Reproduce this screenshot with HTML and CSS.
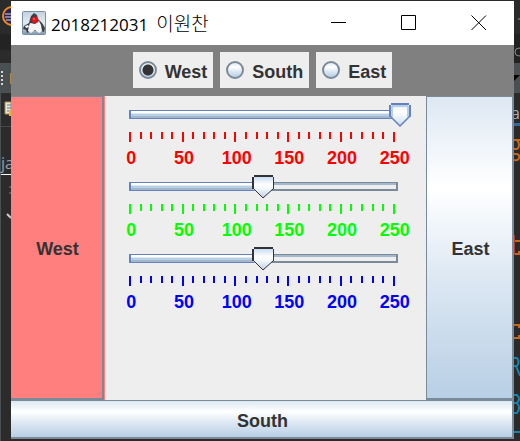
FILE: index.html
```html
<!DOCTYPE html>
<html lang="ko">
<head>
<meta charset="utf-8">
<title>2018212031 이원찬</title>
<link rel="stylesheet" href="styles.css">
</head>
<body>
<svg class="backdrop backdrop-left" width="11" height="441" aria-hidden="true">
  <rect width="11" height="441" fill="#2b2b2b"/>
  <rect y="34" width="11" height="16" fill="#232323"/>
  <rect y="63" width="11" height="30" fill="#4a4f52"/>
  <rect y="93" width="1" height="348" fill="#4a4f52"/>
  <rect x="1" y="126" width="10" height="1" fill="#45484c"/>
  <circle cx="12" cy="16" r="9" fill="#2c2255" stroke="#f08a1c" stroke-width="2"/>
  <path d="M5 14h6M5 17h6M6 20h5" stroke="#d8d8e8"/>
  <path d="M1 71h2v2h-2zM1 75h2v2h-2zM1 79h2v2h-2zM1 83h2v2h-2z" fill="#d6d6d0"/>
  <path d="M10 73h1v11h-1z" fill="#a88c48"/>
  <path d="M5 102h6v12h-6z" fill="#e9e6d6" stroke="#a88c48"/>
  <path d="M7 105h4M7 108h4M7 111h2" stroke="#5a78b0"/>
  <path d="M9 110h2v6h-2z" fill="#edb72e"/>
  <rect x="1" y="174" width="10" height="1" fill="#fff"/>
  <path d="M9 186h2v2h-2zM9 192h2v2h-2z" fill="#555"/>
  <path d="M7 214l4 4" stroke="#ccc" stroke-width="2"/>
  <text class="code-small" x="1" y="169" fill="#9a9fa4">ja</text>
</svg>
<svg class="backdrop backdrop-right" width="6" height="441" aria-hidden="true">
  <rect width="6" height="441" fill="#2a2a2b"/>
  <rect y="34" width="6" height="29" fill="#222"/>
  <rect y="63" width="6" height="30" fill="#4a4f52"/>
  <path d="M0 81V75H6z" fill="#000"/>
  <path d="M4 19h2" stroke="#999"/>
  <circle cx="5" cy="52" r="4" fill="none" stroke="#888"/>
  <rect y="123" width="6" height="3" fill="#2f6a9e"/>
  <path d="M0 140h6M0 149h3q2-1 2-4t-2-5M0 154h3q3 1 2 4t-5 2" fill="none" stroke="#c4681a" stroke-width="2"/>
  <path d="M0 241h6M0 254h5v-3M0 325h5v3M0 338h5v-3" fill="none" stroke="#c4681a" stroke-width="2"/>
  <path d="M0 235v20" stroke="#b03a30" stroke-width="2"/>
  <path d="M0 358h3q3 4 0 8H0M2 366l4 10M0 395h3q4 4 0 8H0M3 403q4 5 0 10H0M0 432h6" fill="none" stroke="#1685ad" stroke-width="2"/>
  <text class="code-small" x="-3" y="119" fill="#a9adb2">a</text>
</svg>

<main class="window">
  <header class="titlebar">
    <svg class="duke" width="24" height="24" viewBox="0 0 24 24" aria-hidden="true">
      <defs>
        <linearGradient id="tile" x2="0" y2="1">
          <stop stop-color="#c3d2df"/><stop offset=".5" stop-color="#e4ebf1"/><stop offset="1" stop-color="#8299b0"/>
        </linearGradient>
      </defs>
      <rect x=".5" y=".5" width="23" height="23" rx="1" fill="url(#tile)" stroke="#7790a8"/>
      <path d="M12 2Q9 4 8 8L7 12L2 15L1 18L4 19L5 22L9 20L19 20L22 21L23 17L20 12L16 8L15 4Z" fill="#3b4044"/>
      <path d="M8 12L13 13L17 10L19 14L20 20L17 22L13 19L9 22L6 20L7 15Z" fill="#f4f5f5"/>
      <path d="M3 15L6 14L7 16L4 17Z" fill="#fff"/>
      <circle cx="13" cy="9" r="3.300" fill="#e3131b"/>
      <circle cx="12" cy="8" r="1" fill="#ff6b63"/>
    </svg>
    <h1 class="title"><span>2018212031</span> <span class="name">이원찬</span></h1>
    <div class="controls">
      <button type="button" aria-label="Minimize"><svg width="16" height="16" viewBox="0 0 16 16"><path d="M0 7.500h15"/></svg></button>
      <button type="button" aria-label="Maximize"><svg width="16" height="16" viewBox="0 0 16 16"><path d="M.5.5h14v14H.5z"/></svg></button>
      <button type="button" aria-label="Close"><svg width="16" height="16" viewBox="0 0 16 16"><path d="M.5.500l14.500 14.500M15 .5L.5 15"/></svg></button>
    </div>
  </header>

  <div class="options" role="radiogroup" aria-label="Position">
    <label class="option"><input type="radio" name="position" checked>West</label>
    <label class="option"><input type="radio" name="position">South</label>
    <label class="option"><input type="radio" name="position">East</label>
  </div>

  <div class="middle">
    <div class="west-cell"><button type="button" class="side west">West</button></div>
    <section class="sliders">
      <div class="channel red">
        <div class="slider">
          <div class="track"><div class="fill" style="width:100%"></div></div>
          <input class="active" type="range" min="0" max="250" value="250" aria-label="Red">
        </div>
        <div class="ticks"><i></i><i></i><i></i><i></i><i></i><i></i><i></i><i></i><i></i><i></i><i></i><i></i><i></i><i></i><i></i><i></i><i></i><i></i><i></i><i></i><i></i><i></i><i></i><i></i><i></i><i></i></div>
        <div class="scale"><span>0</span><span>50</span><span>100</span><span>150</span><span>200</span><span>250</span></div>
      </div>
      <div class="channel green">
        <div class="slider">
          <div class="track"><div class="fill" style="width:50%"></div></div>
          <input type="range" min="0" max="250" value="125" aria-label="Green">
        </div>
        <div class="ticks"><i></i><i></i><i></i><i></i><i></i><i></i><i></i><i></i><i></i><i></i><i></i><i></i><i></i><i></i><i></i><i></i><i></i><i></i><i></i><i></i><i></i><i></i><i></i><i></i><i></i><i></i></div>
        <div class="scale"><span>0</span><span>50</span><span>100</span><span>150</span><span>200</span><span>250</span></div>
      </div>
      <div class="channel blue">
        <div class="slider">
          <div class="track"><div class="fill" style="width:50%"></div></div>
          <input type="range" min="0" max="250" value="125" aria-label="Blue">
        </div>
        <div class="ticks"><i></i><i></i><i></i><i></i><i></i><i></i><i></i><i></i><i></i><i></i><i></i><i></i><i></i><i></i><i></i><i></i><i></i><i></i><i></i><i></i><i></i><i></i><i></i><i></i><i></i><i></i></div>
        <div class="scale"><span>0</span><span>50</span><span>100</span><span>150</span><span>200</span><span>250</span></div>
      </div>
    </section>
    <button type="button" class="side east">East</button>
  </div>

  <button type="button" class="south">South</button>
</main>
</body>
</html>
```
FILE: styles.css
```css
:root {
  --edge: #7a8a99;
  --panel: #eee;
  --metal: linear-gradient(#dde8f3, #fff 30%, #dde8f3 60%, #b8cfe5);
}

* { box-sizing: border-box; }

body {
  margin: 0;
  height: 100vh;
  padding: 1px 6px 2px 11px;
  background: #2a2a2b;
  color: #333;
  font: bold 18px/20px "Liberation Sans", Arial, sans-serif;
  overflow: hidden;
}

button {
  margin: 0;
  padding: 0;
  border: 0;
  color: inherit;
  font: inherit;
}

.backdrop { position: absolute; top: 0; }
.backdrop-left { left: 0; }
.backdrop-right { right: 0; }
.code-small { font: 16px "Open Sans", sans-serif; }

.window {
  position: relative;
  display: flex;
  flex-direction: column;
  height: 100%;
  background: var(--panel);
}

.titlebar {
  display: flex;
  align-items: center;
  height: 44px;
  padding-left: 11px;
  background: #fff;
}
.duke { flex: none; margin-right: 5px; }
.title {
  display: flex;
  align-items: baseline;
  gap: 8px;
  flex: 1;
  margin: 0;
  padding-top: 2px;
  color: #000;
  font: 17px/24px "Open Sans", "Noto Sans CJK KR", sans-serif;
  white-space: nowrap;
}
.name {
  font-size: 19px;
  font-weight: 300;
}
.controls { display: flex; align-self: stretch; }
.controls button {
  display: grid;
  place-items: center;
  width: 70px;
  background: none;
}
.controls svg { fill: none; stroke: #000; }

.options {
  display: flex;
  justify-content: center;
  gap: 7px;
  padding: 7px 0 8px;
  background: #808080;
}
.option {
  display: flex;
  align-items: center;
  gap: 8px;
  height: 36px;
  padding: 4px 6px 0 6px;
  background: var(--panel);
}
.option input {
  appearance: none;
  width: 18px;
  height: 18px;
  margin: 0 0 4px;
  border: 2px solid var(--edge);
  border-radius: 50%;
  background: var(--metal);
}
.option input:checked {
  background: radial-gradient(circle, #333 5px, transparent 6px), var(--metal);
}

.middle { display: flex; flex: 1; min-height: 0; }
.west-cell {
  display: flex;
  width: 94px;
  padding-right: 1px;
  background: #ff7f7f;
}
.side {
  padding: 2px 0 0 2px;
  border: solid var(--edge);
  border-width: 1px 2px 2px 0;
}
.west { flex: 1; background: #ff7f7f; }
.east {
  width: 88px;
  border-left-width: 1px;
  background: var(--metal);
}

.sliders {
  display: flex;
  flex: 1;
  flex-direction: column;
  gap: 5px;
  padding-top: 7px;
}
.red { color: #f00; }
.green { color: #0f0; }
.blue { color: #00f; }

.slider {
  display: grid;
  margin: 0 15px 5px 10px;
}
.slider > * { grid-area: 1 / 1; }
.track {
  height: 9px;
  margin: 7px 13px 0 14px;
  border: solid var(--edge);
  border-width: 1px 2px 2px 0;
  background: linear-gradient(#a3b8cc 2px, var(--panel) 2px);
}
.fill {
  height: 9px;
  margin-top: -1px;
  border: solid #6382bf;
  border-width: 1px 0 1px 2px;
  background: linear-gradient(#fff 2px, #dde8f3 2px 3px, #b8cfe5 3px 5px, #a3b8cc 5px);
}
.slider input {
  appearance: none;
  width: 100%;
  height: 24px;
  margin: 0;
  background: none;
}
.slider input::-webkit-slider-thumb {
  appearance: none;
  width: 22px;
  height: 24px;
  background: url("data:image/svg+xml,%3Csvg xmlns='http://www.w3.org/2000/svg' width='22' height='24'%3E%3ClinearGradient id='g' x2='0' y2='1'%3E%3Cstop stop-color='%23c8ddf2'/%3E%3Cstop offset='.35' stop-color='%23fff'/%3E%3Cstop offset='.55' stop-color='%23f4f8fc'/%3E%3Cstop offset='1' stop-color='%23b8cfe5'/%3E%3C/linearGradient%3E%3Cpath d='M1 2H21V14L11 23L1 14Z' fill='url(%23g)'/%3E%3Cpath d='M2 0H21V2H2ZM0 2H2V14H0ZM21 2H22V14H21Z' fill='%23333'/%3E%3Cpath d='M1.500 13.500L11 23L21.500 13.500' fill='none' stroke='%23333'/%3E%3C/svg%3E");
}
.slider input.active::-webkit-slider-thumb {
  background: url("data:image/svg+xml,%3Csvg xmlns='http://www.w3.org/2000/svg' width='22' height='24'%3E%3ClinearGradient id='g' x2='0' y2='1'%3E%3Cstop stop-color='%23e8f0f8'/%3E%3Cstop offset='.35' stop-color='%23fff'/%3E%3Cstop offset='1' stop-color='%23c8dcf0'/%3E%3C/linearGradient%3E%3Cpath d='M1 2H21V14L11 23L1 14Z' fill='url(%23g)'/%3E%3Cpath d='M3 3H19M3 3V14M19 3V14' fill='none' stroke='%23b8cfe5' stroke-width='2'/%3E%3Cpath d='M2 0H20V2H2ZM0 2H2V14H0ZM20 2H22V14H20Z' fill='%236382bf'/%3E%3Cpath d='M1.500 13.500L11 23L20.500 13.500' fill='none' stroke='%236382bf' stroke-width='1.500'/%3E%3C/svg%3E");
}

.ticks {
  display: flex;
  justify-content: space-between;
  height: 10px;
  margin: 0 31px 5px 24px;
}
.ticks i { width: 2px; height: 7px; background: currentColor; }
.ticks i:nth-child(5n + 1) { height: 10px; }

.scale {
  display: grid;
  grid-template-columns: repeat(6, 1fr);
  margin-right: 5px;
  line-height: 23px;
  text-align: center;
}

.south {
  height: 39px;
  padding: 4px 0 0 2px;
  border: solid var(--edge);
  border-width: 1px 2px 2px 0;
  background: var(--metal);
}
```
